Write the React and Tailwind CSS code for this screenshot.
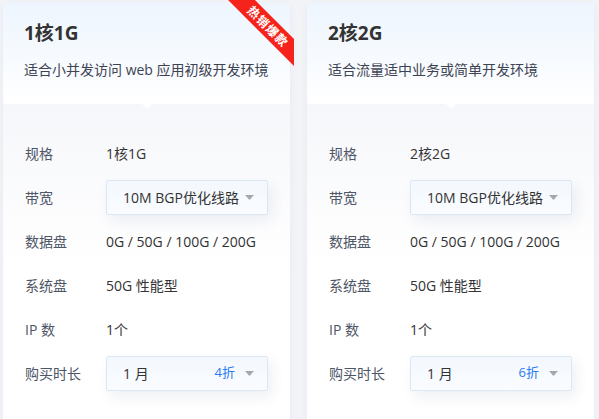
import React from "react";

const PLANS = [
  {
    title: "1核1G",
    desc: "适合小并发访问 web 应用初级开发环境",
    spec: "1核1G",
    discount: "4折",
    hot: true,
  },
  {
    title: "2核2G",
    desc: "适合流量适中业务或简单开发环境",
    spec: "2核2G",
    discount: "6折",
    hot: false,
  },
];

function Arrow() {
  return (
    <svg width="9" height="5" viewBox="0 0 9 5" className="shrink-0">
      <path d="M0 0 L9 0 L4.5 5 Z" fill="#a3a8b0" />
    </svg>
  );
}

function Select({ children, extra }) {
  return (
    <div className="flex h-[35px] w-[162px] items-center rounded-[2px] border border-[#dce7f4] bg-gradient-to-b from-[#f3f8fe] to-[#fafcff] pl-4 pr-[13px] shadow-[4px_6px_14px_rgba(40,70,120,0.08)]">
      <span className="flex-1 truncate text-[14px] text-[#333]">{children}</span>
      {extra && <span className="mr-[10px] text-[13px] text-[#2b7bf4]">{extra}</span>}
      <Arrow />
    </div>
  );
}

function Row({ label, children }) {
  return (
    <div className="flex h-[44px] items-center">
      <div className="w-[81px] shrink-0 text-[14px] text-[#4d5566]">{label}</div>
      <div className="text-[14px] text-[#333]">{children}</div>
    </div>
  );
}

function Card({ plan }) {
  return (
    <div className="relative w-[287px] shrink-0 bg-white shadow-[0_2px_8px_rgba(30,50,90,0.04)]">
      {plan.hot && (
        <div className="absolute -right-[4px] -top-[3px] z-10 h-[70px] w-[70px] overflow-hidden">
          <div className="absolute left-[-6px] top-[17px] flex h-[19px] w-[100px] rotate-45 items-center justify-center bg-[#f5231b] text-[12px] font-bold tracking-[1px] text-white">
            热销爆款
          </div>
        </div>
      )}
      <div className="relative h-[101px] bg-gradient-to-b from-[#edf5fe] to-white px-[21px] pt-[17px]">
        <div className="text-[19px] font-bold leading-[26px] text-[#333]">{plan.title}</div>
        <div className="mt-[14px] text-[14px] leading-[20px] text-[#3d4353]">{plan.desc}</div>
        <div className="absolute bottom-[-5px] left-1/2 z-10 h-0 w-0 -translate-x-1/2 border-x-[6px] border-t-[6px] border-x-transparent border-t-white" />
      </div>
      <div className="bg-gradient-to-b from-[#f6f7fa] via-white to-white px-[22px] pb-[40px] pt-[27px]">
        <Row label="规格">{plan.spec}</Row>
        <Row label="带宽">
          <Select>10M BGP优化线路</Select>
        </Row>
        <Row label="数据盘">0G / 50G / 100G / 200G</Row>
        <Row label="系统盘">50G 性能型</Row>
        <Row label="IP 数">1个</Row>
        <Row label="购买时长">
          <Select extra={plan.discount}>1 月</Select>
        </Row>
      </div>
    </div>
  );
}

export default function App() {
  return (
    <div
      className="flex min-h-[419px] gap-[17px] overflow-hidden bg-[#f2f3f7] pl-[3px] pt-[3px]"
      style={{ fontFamily: '"Open Sans", "Noto Sans CJK SC", sans-serif' }}
    >
      {PLANS.map((p) => (
        <Card key={p.title} plan={p} />
      ))}
    </div>
  );
}
